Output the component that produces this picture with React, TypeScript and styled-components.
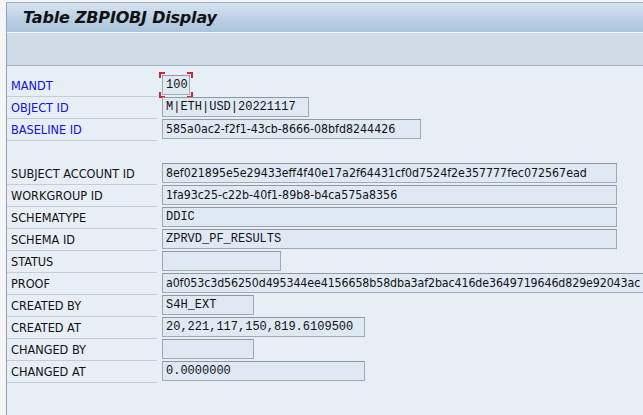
import React from "react";
import styled, { createGlobalStyle } from "styled-components";

const Global = createGlobalStyle`
  html, body { margin: 0; padding: 0; background: #f4f5f7; overflow: hidden; }
  body { font-family: "DejaVu Sans Condensed", "DejaVu Sans", sans-serif; }
`;

const Win = styled.div`
  margin: 2px 0 0 6px;
  height: 413px;
  border-left: 1px solid #93a3b4;
  border-top: 1px solid #a5b1bd;
  display: flex;
  flex-direction: column;
  background: #e8eef6;
  overflow: hidden;
`;

const TitleBar = styled.div`
  height: 29px;
  display: flex;
  align-items: center;
  padding-left: 16px;
  background: linear-gradient(#d7e4f1, #b9cee3 60%, #acc4dc);
  border-bottom: 1px solid #f2f6fa;
  font-family: "DejaVu Sans", sans-serif;
  font-weight: bold;
  font-style: italic;
  font-size: 16px;
  color: #111;
  letter-spacing: -0.2px;
`;

const Toolbar = styled.div`
  height: 32px;
  background: #cfdce7;
  border-bottom: 1px solid #a3b5c7;
`;

const Content = styled.div`
  flex: 1;
  padding-top: 9px;
  display: flex;
  flex-direction: column;
`;

const Row = styled.div`
  height: 22px;
  display: flex;
  align-items: flex-start;
`;

const Label = styled.div<{ $key?: boolean }>`
  flex-shrink: 0;
  width: 146px;
  height: 21px;
  padding-left: 4px;
  border-bottom: 1px solid #c5ccd4;
  display: flex;
  align-items: center;
  font-size: 12.6px;
  color: ${(p) => (p.$key ? "#1010e8" : "#111")};
`;

const Field = styled.div<{ $w: number; $mono?: boolean; $tight?: boolean }>`
  position: relative;
  flex-shrink: 0;
  margin-left: 5px;
  width: ${(p) => p.$w}px;
  height: 20px;
  box-sizing: border-box;
  border: 1px solid #a2a9b1;
  border-top-color: #8f979f;
  background: #dfe9f4;
  padding-left: 3px;
  display: flex;
  align-items: center;
  white-space: nowrap;
  color: #111;
  letter-spacing: ${(p) => (p.$tight ? "-0.1px" : "normal")};
  font-size: ${(p) => (p.$mono ? "12px" : "12.3px")};
  font-family: ${(p) =>
    p.$mono ? '"Liberation Mono", monospace' : '"DejaVu Sans Condensed", "DejaVu Sans", sans-serif'};
`;

const Corners = styled.span`
  position: absolute;
  inset: -4px;
  pointer-events: none;
  background:
    linear-gradient(#d8232a, #d8232a) left top / 6px 2px no-repeat,
    linear-gradient(#d8232a, #d8232a) left top / 2px 6px no-repeat,
    linear-gradient(#d8232a, #d8232a) right top / 6px 2px no-repeat,
    linear-gradient(#d8232a, #d8232a) right top / 2px 6px no-repeat,
    linear-gradient(#d8232a, #d8232a) left bottom / 6px 2px no-repeat,
    linear-gradient(#d8232a, #d8232a) left bottom / 2px 6px no-repeat,
    linear-gradient(#d8232a, #d8232a) right bottom / 6px 2px no-repeat,
    linear-gradient(#d8232a, #d8232a) right bottom / 2px 6px no-repeat;
`;

const Spacer = styled.div`
  height: 22px;
`;

type F = {
  label: string;
  value: string;
  w: number;
  mono?: boolean;
  key?: boolean;
  focus?: boolean;
  tight?: boolean;
};

const top: F[] = [
  { label: "MANDT", value: "100", w: 28, mono: true, key: true, focus: true },
  { label: "OBJECT ID", value: "M|ETH|USD|20221117", w: 147, mono: true, key: true },
  { label: "BASELINE ID", value: "585a0ac2-f2f1-43cb-8666-08bfd8244426", w: 259, key: true },
];

const rest: F[] = [
  { label: "SUBJECT ACCOUNT ID", value: "8ef021895e5e29433eff4f40e17a2f64431cf0d7524f2e357777fec072567ead", w: 455 },
  { label: "WORKGROUP ID", value: "1fa93c25-c22b-40f1-89b8-b4ca575a8356", w: 455 },
  { label: "SCHEMATYPE", value: "DDIC", w: 455, mono: true },
  { label: "SCHEMA ID", value: "ZPRVD_PF_RESULTS", w: 455, mono: true },
  { label: "STATUS", value: "", w: 119 },
  {
    label: "PROOF",
    value: "a0f053c3d56250d495344ee4156658b58dba3af2bac416de3649719646d829e92043ac",
    w: 520,
    tight: true,
  },
  { label: "CREATED BY", value: "S4H_EXT", w: 92, mono: true },
  { label: "CREATED AT", value: "20,221,117,150,819.6109500", w: 203, mono: true },
  { label: "CHANGED BY", value: "", w: 92 },
  { label: "CHANGED AT", value: "0.0000000", w: 203, mono: true },
];

const FieldRow = ({ f }: { f: F }) => (
  <Row>
    <Label $key={f.key}>{f.label}</Label>
    <Field $w={f.w} $mono={f.mono} $tight={f.tight}>
      {f.value}
      {f.focus && <Corners />}
    </Field>
  </Row>
);

export default function App() {
  return (
    <>
      <Global />
      <Win>
        <TitleBar>Table ZBPIOBJ Display</TitleBar>
        <Toolbar />
        <Content>
          {top.map((f) => (
            <FieldRow key={f.label} f={f} />
          ))}
          <Spacer />
          {rest.map((f) => (
            <FieldRow key={f.label} f={f} />
          ))}
        </Content>
      </Win>
    </>
  );
}
